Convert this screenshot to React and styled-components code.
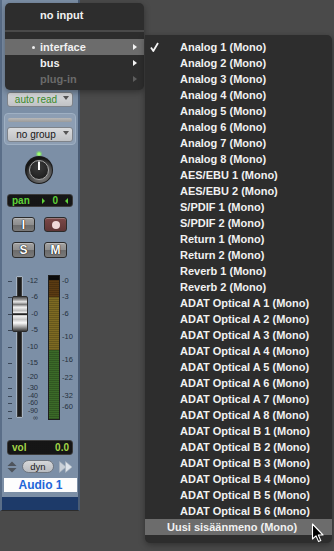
import React from 'react';
import styled, { createGlobalStyle } from 'styled-components';

const Global = createGlobalStyle`
  html, body { margin: 0; padding: 0; background: #4a4a4a; }
  body { font-family: "Liberation Sans", Arial, sans-serif; }
`;

const Stage = styled.div`
  position: relative;
  width: 334px;
  height: 551px;
  overflow: hidden;
  background: #4a4a4a;
`;

/* ---------- channel strip ---------- */
const Strip = styled.div`
  width: 80px;
  height: 511px;
  box-sizing: border-box;
  background: #7c8fa6;
  border-left: 2px solid #5a6e88;
  border-right: 2px solid #4a5c74;
  border-bottom: 1px solid #2c2c2c;
  padding: 92px 5px 0 5px;
  display: flex;
  flex-direction: column;
`;

const Dropdown = styled.div`
  position: relative;
  height: 15px;
  flex: none;
  box-sizing: border-box;
  border: 1px solid #7e838a;
  border-radius: 3px;
  background: linear-gradient(#dadbdd, #c0c2c5);
  display: flex;
  align-items: center;
  justify-content: center;
  padding-right: 8px;
  font-size: 10px;
  color: ${p => (p.$green ? '#3a8a2b' : '#161616')};
`;

const DropArrow = styled.span`
  position: absolute;
  right: 3px;
  top: 3px;
  width: 0;
  height: 0;
  border-left: 3px solid transparent;
  border-right: 3px solid transparent;
  border-top: 4px solid #555;
`;

const GroupBox = styled.div`
  margin: 6px -3px 0 -3px;
  height: 32px;
  box-sizing: border-box;
  border-radius: 4px;
  background: #8d9eb3;
  border: 1px solid #9fb0c3;
  padding: 4px 2px 0 2px;
  display: flex;
  flex-direction: column;
  gap: 5px;
`;

const GroupBar = styled.div`
  height: 4px;
  margin: 0 1px;
  border-radius: 2px;
  background: linear-gradient(#b8b8b8, #9a9a9a);
`;

const KnobWrap = styled.div`
  margin: 6px 0 0 16px;
  width: 32px;
  height: 34px;
  flex: none;
`;

const Display = styled.div`
  height: ${p => p.$h}px;
  flex: none;
  box-sizing: border-box;
  margin-top: ${p => p.$mt}px;
  background: radial-gradient(#1d1d1d 0.5px, #0c0c0c 1px) 0 0 / 2px 2px;
  border: 1px solid #3b3b3b;
  border-radius: 3px;
  display: flex;
  align-items: center;
  padding: 0 ${p => p.$pr}px 0 4px;
  font-size: 10px;
  font-weight: bold;
  color: ${p => p.$color};
`;

const PanValue = styled.div`
  margin-left: auto;
  display: flex;
  align-items: center;
  gap: 7px;
`;

const Tri = styled.span`
  width: 0;
  height: 0;
  border-top: 3px solid transparent;
  border-bottom: 3px solid transparent;
  ${p => (p.$dir === 'right' ? 'border-left: 3px solid #5ed23a;' : 'border-right: 3px solid #5ed23a;')}
`;

const BtnRow = styled.div`
  margin-top: 10px;
  height: ${p => p.$h}px;
  flex: none;
  display: flex;
  gap: 9px;
  padding-left: 5px;
`;

const ToggleBtn = styled.div`
  width: 23px;
  height: 100%;
  box-sizing: border-box;
  border: 1px solid #2b2b2b;
  border-radius: 3px;
  background: ${p =>
    p.$rec
      ? 'linear-gradient(#7b4848, #5f3636)'
      : 'linear-gradient(#a3a3a3 0%, #8e8e8e 50%, #6c6c6c 52%, #7a7a7a 100%)'};
  box-shadow: inset 0 1px 0 rgba(255,255,255,0.25);
  display: flex;
  align-items: center;
  justify-content: center;
  color: #fff;
  font-size: 12px;
  font-weight: bold;
  text-shadow: 0 0 1px #000, 0 0 1px #000;
`;

const RecDot = styled.span`
  width: 8px;
  height: 8px;
  border-radius: 50%;
  background: #f1d9d9;
`;

const FaderSection = styled.div`
  margin-top: 14px;
  height: 148px;
  flex: none;
  display: flex;
`;

const FaderScale = styled.div`
  position: relative;
  width: 33px;
  height: 100%;
`;

const Slot = styled.div`
  position: absolute;
  left: 9px;
  top: 4px;
  width: 7px;
  height: 142px;
  box-sizing: border-box;
  border: 1px solid #a6b4c4;
  border-radius: 1px;
  background: #1b1b1b;
  box-shadow: inset 0 0 0 1px #3a3a3a;
`;

const Cap = styled.div`
  position: absolute;
  left: 5px;
  top: 24px;
  width: 16px;
  height: 36px;
  box-sizing: border-box;
  border: 1px solid #2a2a2a;
  border-radius: 2px;
  background: linear-gradient(
    #4a4a4a 0%, #9a9a9a 8%, #e8e8e8 14%, #7a7a7a 22%, #f2f2f2 30%,
    #bdbdbd 40%, #f6f6f6 47%, #222 49%, #222 52%, #f6f6f6 55%,
    #c8c8c8 66%, #fafafa 76%, #a0a0a0 88%, #3a3a3a 100%
  );
`;

const Tick = styled.span`
  position: absolute;
  left: 1px;
  width: 4px;
  height: 1px;
  background: #3a4656;
`;

const ScaleLabel = styled.span`
  position: absolute;
  font-size: ${p => (p.$small ? 7 : 7.5)}px;
  line-height: 6px;
  height: 6px;
  overflow: visible;
  color: #26303c;
  white-space: nowrap;
  ${p => (p.$right ? 'right: 2px;' : 'left: 0;')}
`;

const Meter = styled.div`
  margin: 3px 0 0 8px;
  width: 12px;
  height: 145px;
  box-sizing: border-box;
  border: 1px solid #1e1e1e;
  display: flex;
  flex-direction: column;
  position: relative;
`;

const MeterSeg = styled.div`
  height: ${p => p.$h}px;
  flex: ${p => (p.$grow ? 1 : 'none')};
  background:
    repeating-linear-gradient(rgba(0,0,0,0.18) 0 1px, transparent 1px 2px),
    ${p => p.$c};
`;

const MeterScale = styled.div`
  position: relative;
  margin-left: 2px;
  flex: 1;
  height: 100%;
`;

const DynRow = styled.div`
  margin-top: 5px;
  height: 13px;
  flex: none;
  display: flex;
  align-items: center;
`;

const DynPill = styled.div`
  margin-left: 5px;
  width: 32px;
  height: 13px;
  box-sizing: border-box;
  border: 1px solid #6f767f;
  border-radius: 7px;
  background: linear-gradient(#d6d7d9, #b9bcc0);
  display: flex;
  align-items: center;
  justify-content: center;
  font-size: 9.5px;
  color: #1b1b1b;
`;

const NamePlate = styled.div`
  margin: 5px -4px 0 -3px;
  height: 14px;
  flex: none;
  background: #fdfdfd;
  display: flex;
  align-items: center;
  justify-content: center;
  font-size: 12px;
  font-weight: bold;
  color: #2266d8;
`;

const BottomBar = styled.div`
  margin: auto -5px 0 -5px;
  height: 13px;
  flex: none;
  background: #1d3a69;
`;

/* ---------- menus ---------- */
const Menu = styled.div`
  position: absolute;
  left: ${p => p.$x}px;
  top: ${p => p.$y}px;
  width: ${p => p.$w}px;
  height: ${p => p.$h}px;
  box-sizing: border-box;
  padding: ${p => p.$pad};
  background: #2d2d2d;
  border-radius: ${p => p.$radius};
  box-shadow: 0 2px 6px rgba(0,0,0,0.35);
  display: flex;
  flex-direction: column;
`;

const MenuRow = styled.div`
  height: 16px;
  flex: none;
  display: flex;
  align-items: center;
  padding-left: ${p => p.$indent || 0}px;
  background: ${p => (p.$active ? '#6c6c6c' : 'transparent')};
  color: ${p => (p.$disabled ? '#6a6a6a' : '#f1f1f1')};
  font-size: 11px;
  font-weight: bold;
  white-space: nowrap;
`;

const Mark = styled.span`
  width: 35px;
  flex: none;
  box-sizing: border-box;
  display: flex;
  align-items: center;
  justify-content: ${p => (p.$end ? 'flex-end' : 'flex-start')};
  padding: ${p => (p.$end ? '0 5px 0 0' : '0 0 0 5px')};
`;

const Bullet = styled.span`
  width: 3px;
  height: 3px;
  border-radius: 50%;
  background: #eee;
`;

const SubArrow = styled.span`
  margin: 0 7px 0 auto;
  width: 0;
  height: 0;
  border-top: 3px solid transparent;
  border-bottom: 3px solid transparent;
  border-left: 4px solid ${p => (p.$disabled ? '#5e5e5e' : '#f4f4f4')};
`;

const Separator = styled.div`
  height: 2px;
  margin: 7px 0;
  flex: none;
  background: #4a4a4a;
`;

const Cursor = styled.svg`
  position: absolute;
  left: 311px;
  top: 523px;
`;

const faderMarks = [
  ['-12', 9], ['-6', 25], ['-0', 42], ['-5', 58], ['-10', 75], ['-15', 91],
  ['-20', 105], ['-30', 116], ['-40', 124], ['-60', 131], ['-90', 139], ['∞', 146],
];
const meterMarks = [
  ['-0', 9], ['-3', 25], ['-6', 42], ['-10', 65], ['-16', 88], ['-22', 106], ['-32', 124], ['-60', 135],
];

const inputs = [
  ...[1, 2, 3, 4, 5, 6, 7, 8].map(n => `Analog ${n} (Mono)`),
  'AES/EBU 1 (Mono)', 'AES/EBU 2 (Mono)',
  'S/PDIF 1 (Mono)', 'S/PDIF 2 (Mono)',
  'Return 1 (Mono)', 'Return 2 (Mono)',
  'Reverb 1 (Mono)', 'Reverb 2 (Mono)',
  ...[1, 2, 3, 4, 5, 6, 7, 8].map(n => `ADAT Optical A ${n} (Mono)`),
  ...[1, 2, 3, 4, 5, 6].map(n => `ADAT Optical B ${n} (Mono)`),
];

function Knob() {
  return (
    <svg width="32" height="34" viewBox="0 0 32 34">
      <defs>
        <radialGradient id="kring" cx="60%" cy="70%" r="65%">
          <stop offset="0" stopColor="#8a8a8a" />
          <stop offset="0.7" stopColor="#4a4a4a" />
          <stop offset="1" stopColor="#151515" />
        </radialGradient>
        <radialGradient id="kface" cx="45%" cy="35%" r="70%">
          <stop offset="0" stopColor="#3c3c3c" />
          <stop offset="1" stopColor="#1c1c1c" />
        </radialGradient>
      </defs>
      <circle cx="16" cy="3" r="3" fill="#7dff52" opacity="0.35" />
      <circle cx="16" cy="3" r="1.8" fill="#9dff6a" />
      <circle cx="16" cy="19" r="14" fill="#1a1a1a" />
      <circle cx="16" cy="19" r="13" fill="url(#kring)" />
      <circle cx="16" cy="19" r="9.5" fill="url(#kface)" stroke="#a8a8a8" strokeWidth="1" />
      <line x1="16" y1="19" x2="16" y2="10.5" stroke="#fff" strokeWidth="2" />
    </svg>
  );
}

function Check() {
  return (
    <svg width="9" height="10" viewBox="0 0 9 10">
      <path d="M1 5.5 L3.3 9 L8 1" fill="none" stroke="#f4f4f4" strokeWidth="1.8" strokeLinejoin="round" />
    </svg>
  );
}

export default function App() {
  return (
    <Stage>
      <Global />
      <Strip>
        <Dropdown $green>
          auto read
          <DropArrow />
        </Dropdown>
        <GroupBox>
          <GroupBar />
          <Dropdown>
            no group
            <DropArrow />
          </Dropdown>
        </GroupBox>
        <KnobWrap>
          <Knob />
        </KnobWrap>
        <Display $h={13} $mt={9} $pr={4} $color="#5ed23a">
          pan
          <PanValue>
            <Tri $dir="right" />
            <span>0</span>
            <Tri $dir="left" />
          </PanValue>
        </Display>
        <BtnRow $h={15}>
          <ToggleBtn>I</ToggleBtn>
          <ToggleBtn $rec>
            <RecDot />
          </ToggleBtn>
        </BtnRow>
        <BtnRow $h={16}>
          <ToggleBtn>S</ToggleBtn>
          <ToggleBtn>M</ToggleBtn>
        </BtnRow>
        <FaderSection>
          <FaderScale>
            {faderMarks.map(([t, y], i) => (
              <React.Fragment key={t}>
                <Tick style={{ top: y }} />
                <ScaleLabel $right $small={i >= 8} style={{ top: y - 3 }}>{t}</ScaleLabel>
              </React.Fragment>
            ))}
            <Slot />
            <Cap />
          </FaderScale>
          <Meter>
            <MeterSeg $h={4} $c="#0c0c0c" />
            <MeterSeg $h={17} $c="#5b3b12" />
            <MeterSeg $h={53} $c="#7d6a22" />
            <MeterSeg $grow $c="#3b6a28" />
          </Meter>
          <MeterScale>
            {meterMarks.map(([t, y]) => (
              <ScaleLabel key={t} style={{ top: y - 3 }}>{t}</ScaleLabel>
            ))}
          </MeterScale>
        </FaderSection>
        <Display $h={15} $mt={20} $pr={3} $color="#a4d648">
          vol
          <PanValue>0.0</PanValue>
        </Display>
        <DynRow>
          <svg width="10" height="12" viewBox="0 0 10 12">
            <path d="M5 0.5 L9.5 5 L0.5 5 Z" fill="#4e545c" />
            <path d="M0.5 7 L9.5 7 L5 11.5 Z" fill="#4e545c" />
          </svg>
          <DynPill>dyn</DynPill>
          <svg width="14" height="12" viewBox="0 0 14 12" style={{ marginLeft: 5 }}>
            <path d="M0.5 0.5 L7 6 L0.5 11.5 Z" fill="#c9d0d8" stroke="#aab3be" strokeWidth="0.6" />
            <path d="M6.5 0.5 L13 6 L6.5 11.5 Z" fill="#dde3ea" stroke="#aab3be" strokeWidth="0.6" />
          </svg>
        </DynRow>
        <NamePlate>Audio 1</NamePlate>
        <BottomBar />
      </Strip>

      <Menu $x={5} $y={3} $w={139} $h={87} $pad="4px 0 3px 0" $radius="5px">
        <MenuRow $indent={35}>no input</MenuRow>
        <Separator />
        <MenuRow $active>
          <Mark $end>
            <Bullet />
          </Mark>
          interface
          <SubArrow />
        </MenuRow>
        <MenuRow $indent={35}>
          bus
          <SubArrow />
        </MenuRow>
        <MenuRow $indent={35} $disabled>
          plug-in
          <SubArrow $disabled />
        </MenuRow>
      </Menu>

      <Menu $x={145} $y={35} $w={187} $h={508} $pad="4px 0 8px 0" $radius="0 5px 5px 5px">
        {inputs.map((t, i) => (
          <MenuRow key={t}>
            <Mark>{i === 0 ? <Check /> : null}</Mark>
            {t}
          </MenuRow>
        ))}
        <MenuRow $active $indent={22}>Uusi sisäänmeno (Mono)</MenuRow>
      </Menu>

      <Cursor width="13" height="20" viewBox="0 0 13 20">
        <path d="M1.5 1 L1.5 16 L5 12.8 L7.6 18.6 L9.8 17.6 L7.3 12 L12 12 Z" fill="#000" stroke="#fff" strokeWidth="1.1" strokeLinejoin="round" />
      </Cursor>
    </Stage>
  );
}
